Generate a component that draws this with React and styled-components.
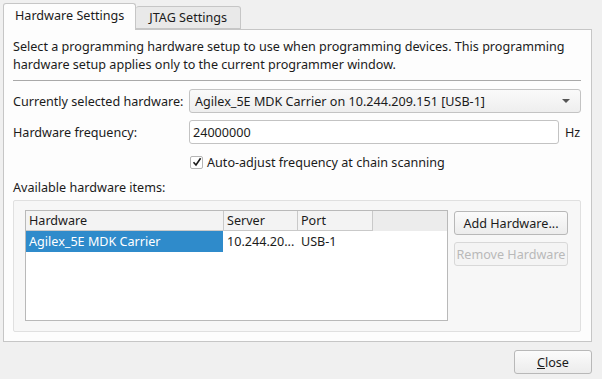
import styled, { createGlobalStyle } from "styled-components";

const GlobalStyle = createGlobalStyle`
  body {
    margin: 0;
    background: #f0f0f0;
    font-family: "Noto Sans", "DejaVu Sans", sans-serif;
    font-size: 12.6px;
    color: #1b1b1b;
  }
`;

const Window = styled.div`
  width: 602px;
  height: 379px;
  box-sizing: border-box;
  padding: 3px 10px 0 3px;
  display: flex;
  flex-direction: column;
  background: #f0f0f0;
  white-space: nowrap;
`;

const TabBar = styled.div`
  display: flex;
  align-items: flex-end;
  height: 26px;
  position: relative;
  z-index: 1;
`;

const Tab = styled.div`
  box-sizing: border-box;
  height: ${(p) => (p.$active ? "27px" : "23px")};
  margin-bottom: ${(p) => (p.$active ? "-1px" : "0")};
  padding: 0 ${(p) => (p.$active ? "11px" : "13px")};
  display: flex;
  align-items: center;
  border: 1px solid #c6c6c6;
  border-bottom: ${(p) => (p.$active ? "none" : "1px solid #c6c6c6")};
  border-left: ${(p) => (p.$active ? "1px solid #c6c6c6" : "none")};
  border-radius: 3px 3px 0 0;
  background: ${(p) => (p.$active ? "#fdfdfd" : "#e9e9e9")};
  padding-bottom: ${(p) => (p.$active ? "3px" : "0")};
`;

const Panel = styled.div`
  box-sizing: border-box;
  height: 313px;
  border: 1px solid #c6c6c6;
  background: #fdfdfd;
  padding: 8px 10px 0 9px;
  display: flex;
  flex-direction: column;
`;

const Description = styled.p`
  margin: 0;
  line-height: 18px;
`;

const Separator = styled.hr`
  margin: 6px 0 8px;
  border: none;
  border-top: 1px solid #a9a9a9;
  height: 0;
`;

const FormRow = styled.div`
  display: flex;
  align-items: center;
  height: 24px;
  margin-bottom: ${(p) => p.$gap || 0}px;
`;

const Label = styled.span`
  width: 176px;
  flex-shrink: 0;
`;

const Combo = styled.div`
  flex: 1;
  height: 24px;
  box-sizing: border-box;
  border: 1px solid #c3c3c3;
  border-radius: 3px;
  background: linear-gradient(#fafafa, #eeeeee);
  display: flex;
  align-items: center;
  padding: 0 10px 0 5px;
  justify-content: space-between;
`;

const Arrow = styled.span`
  width: 0;
  height: 0;
  border-left: 4px solid transparent;
  border-right: 4px solid transparent;
  border-top: 4px solid #555;
`;

const TextInput = styled.div`
  width: 370px;
  height: 24px;
  box-sizing: border-box;
  border: 1px solid #c3c3c3;
  border-radius: 3px;
  background: #ffffff;
  display: flex;
  align-items: center;
  padding-left: 3px;
`;

const Unit = styled.span`
  margin-left: 6px;
`;

const CheckRow = styled.div`
  display: flex;
  align-items: center;
  gap: 4px;
  margin: 7px 0 0 177px;
  height: 22px;
`;

const CheckBox = styled.span`
  width: 13px;
  height: 13px;
  box-sizing: border-box;
  border: 1px solid #b5b5b5;
  border-radius: 2px;
  background: #fff;
  display: flex;
  align-items: center;
  justify-content: center;
`;

const SectionLabel = styled.div`
  margin-top: 5px;
  height: 20px;
  line-height: 20px;
`;

const Group = styled.div`
  margin-top: 2px;
  height: 132px;
  box-sizing: border-box;
  border: 1px solid #e0e0e0;
  border-radius: 2px;
  background: #f7f7f7;
  display: flex;
  gap: 6px;
  padding: 9px 12px 0 11px;
`;

const Table = styled.div`
  width: 423px;
  height: 111px;
  box-sizing: border-box;
  border: 1px solid #b9b9b9;
  background: #ffffff;
  display: flex;
  flex-direction: column;
`;

const HeaderRow = styled.div`
  display: grid;
  grid-template-columns: 198px 74px 75px 1fr;
  height: 20px;
  background: #eeeeee;
`;

const HeaderCell = styled.div`
  border-right: ${(p) => (p.$last ? "none" : "1px solid #c9c9c9")};
  border-bottom: ${(p) => (p.$last ? "none" : "1px solid #c9c9c9")};
  background: ${(p) => (p.$last ? "#ececec" : "#f3f3f3")};
  padding-left: 3px;
  line-height: 19px;
`;

const DataRow = styled.div`
  display: grid;
  grid-template-columns: 198px 74px 75px 1fr;
  height: 21px;
  align-items: stretch;
`;

const Cell = styled.div`
  padding-left: 3px;
  line-height: 21px;
  background: ${(p) => (p.$selected ? "#2f8bcb" : "transparent")};
  color: ${(p) => (p.$selected ? "#ffffff" : "inherit")};
  margin-right: ${(p) => (p.$selected ? "1px" : "0")};
`;

const ButtonColumn = styled.div`
  display: flex;
  flex-direction: column;
  gap: 7px;
  padding-top: 1px;
`;

const Button = styled.button`
  width: ${(p) => p.$width || 114}px;
  height: 24px;
  box-sizing: border-box;
  border: 1px solid ${(p) => (p.disabled ? "#d8d8d8" : "#b8b8b8")};
  border-radius: 3px;
  background: ${(p) =>
    p.disabled ? "#f4f4f4" : "linear-gradient(#fbfbfb, #ececec)"};
  color: ${(p) => (p.disabled ? "#b9b9b9" : "#1b1b1b")};
  font: inherit;
  white-space: nowrap;
  padding: 0;
`;

const Footer = styled.div`
  display: flex;
  justify-content: flex-end;
  padding-top: 8px;
`;

export default function App() {
  return (
    <>
      <GlobalStyle />
      <Window>
        <TabBar>
          <Tab $active>Hardware Settings</Tab>
          <Tab>JTAG Settings</Tab>
        </TabBar>
        <Panel>
          <Description>
            Select a programming hardware setup to use when programming devices. This programming
            <br />
            hardware setup applies only to the current programmer window.
          </Description>
          <Separator />
          <FormRow $gap={7}>
            <Label>Currently selected hardware:</Label>
            <Combo>
              <span>Agilex_5E MDK Carrier on 10.244.209.151 [USB-1]</span>
              <Arrow />
            </Combo>
          </FormRow>
          <FormRow>
            <Label>Hardware frequency:</Label>
            <TextInput>24000000</TextInput>
            <Unit>Hz</Unit>
          </FormRow>
          <CheckRow>
            <CheckBox>
              <svg width="10" height="10" viewBox="0 0 10 10">
                <path d="M1.5 5.2 L4 8 L8.6 1.2" fill="none" stroke="#1b1b1b" strokeWidth="1.6" />
              </svg>
            </CheckBox>
            <span>Auto-adjust frequency at chain scanning</span>
          </CheckRow>
          <SectionLabel>Available hardware items:</SectionLabel>
          <Group>
            <Table>
              <HeaderRow>
                <HeaderCell>Hardware</HeaderCell>
                <HeaderCell>Server</HeaderCell>
                <HeaderCell>Port</HeaderCell>
                <HeaderCell $last />
              </HeaderRow>
              <DataRow>
                <Cell $selected>Agilex_5E MDK Carrier</Cell>
                <Cell>10.244.20...</Cell>
                <Cell>USB-1</Cell>
                <Cell />
              </DataRow>
            </Table>
            <ButtonColumn>
              <Button>Add Hardware...</Button>
              <Button disabled>Remove Hardware</Button>
            </ButtonColumn>
          </Group>
        </Panel>
        <Footer>
          <Button $width={78}>
            <u>C</u>lose
          </Button>
        </Footer>
      </Window>
    </>
  );
}
